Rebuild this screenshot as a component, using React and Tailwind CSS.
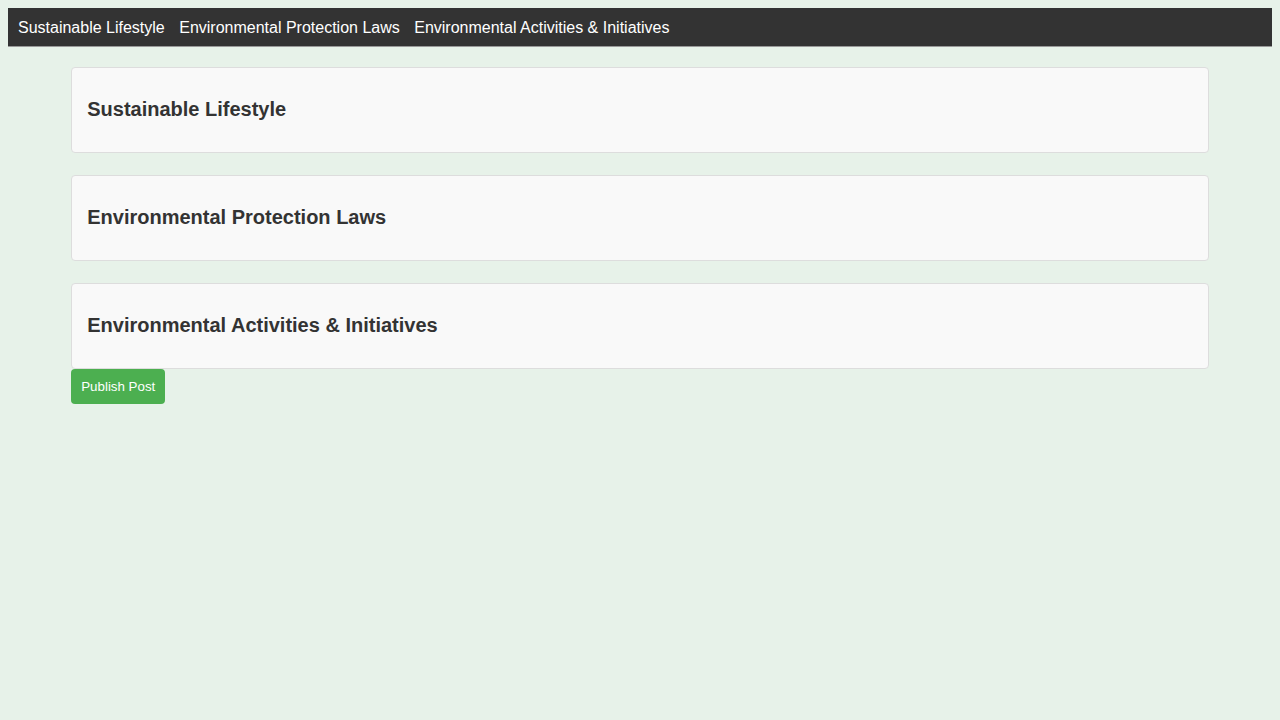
export default function App() {
  const items = [
    "Sustainable Lifestyle",
    "Environmental Protection Laws",
    "Environmental Activities & Initiatives",
  ];
  return (
    <div
      className="min-h-[720px] bg-[#e7f2e9] p-[8px]"
      style={{ fontFamily: '"Liberation Sans", Arial, sans-serif' }}
    >
      <nav className="flex gap-[14.45px] bg-[#333333] border-b border-[#999999] px-[10px] pt-[11px] pb-[9px] text-[16px] leading-[18px] text-white">
        {items.map((t) => (
          <a key={t} className="text-white">
            {t}
          </a>
        ))}
      </nav>
      <main className="mx-auto mt-[20px] w-[90%]">
        {items.map((t, i) => (
          <section
            key={t}
            className={`rounded-[4px] border border-[#dddddd] bg-[#f9f9f9] p-[15px] ${
              i < items.length - 1 ? "mb-[22px]" : ""
            }`}
          >
            <h3 className="mt-[14px] mb-[16px] text-[20px] font-bold leading-[24px] text-[#333333]">
              {t}
            </h3>
          </section>
        ))}
        <button className="rounded-[4px] bg-[#4caf50] px-[10px] py-[10px] text-[13.33px] leading-[15px] text-white">
          Publish Post
        </button>
      </main>
    </div>
  );
}
